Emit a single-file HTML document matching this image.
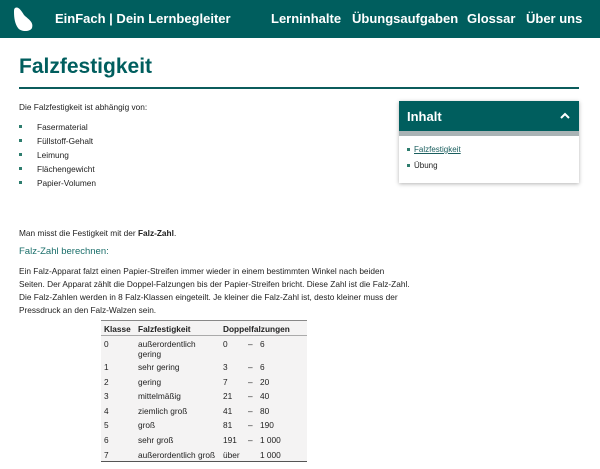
<!DOCTYPE html>
<html><head><meta charset="utf-8"><style>
*{margin:0;padding:0;box-sizing:border-box}
body{width:600px;height:469px;overflow:hidden;background:#fff;font-family:"Liberation Sans",sans-serif;color:#222;position:relative}
.hdr{position:absolute;left:0;top:0;width:600px;height:38px;background:#005e5e;color:#fff;font-size:13px;font-weight:bold}
.hdr span{position:absolute;top:11px}
h1{position:absolute;left:19px;top:55px;font-size:21px;color:#005e5e}
.rule{position:absolute;left:19px;top:87px;width:560px;height:2px;background:#0b5c5c}
.t{font-size:8.3px;position:absolute;left:19px;white-space:nowrap}
.li::before{content:"";position:absolute;left:-18px;top:3px;width:3px;height:3px;background:#2e7d6e}
.li{left:37px}
.toc{position:absolute;left:399px;top:101px;width:180px;height:82px;box-shadow:0 1px 4px rgba(0,0,0,.3);background:#fff}
.toch{height:30px;background:#005e5e;color:#fff;font-weight:bold;font-size:13px;padding:8px 8px;position:relative}
.band{height:5px;background:#a9b3b5}
table{position:absolute;left:101px;top:320px;width:206px;border-collapse:collapse;font-size:8.3px;background:#f4f3f3;border-top:1px solid #888;border-bottom:1px solid #555;table-layout:fixed}
td,th{text-align:left;padding:0 3px;height:14.6px;vertical-align:top;padding-top:3px;line-height:10px;white-space:nowrap}
th{border-bottom:1px solid #aaa;height:15px}
</style></head><body>
<div class="hdr">
<svg style="position:absolute;left:12px;top:6px" width="24" height="26" viewBox="0 0 24 26"><path d="M3 2 C6 0 9 4 12 9 C16 13 22 16 20 22 C18 26 9 26 6 22 C3 18 2 12 2 6 C2 4 2 3 3 2Z" fill="#fff"/></svg>
<span style="left:55px">EinFach | Dein Lernbegleiter</span>
<span style="left:271px">Lerninhalte</span>
<span style="left:352px">Übungsaufgaben</span>
<span style="left:467px">Glossar</span>
<span style="left:526px">Über uns</span>
</div>
<h1>Falzfestigkeit</h1>
<div class="rule"></div>
<div class="t" style="top:102px">Die Falzfestigkeit ist abhängig von:</div>
<div class="t li" style="top:122px">Fasermaterial</div>
<div class="t li" style="top:136px">Füllstoff-Gehalt</div>
<div class="t li" style="top:150px">Leimung</div>
<div class="t li" style="top:164px">Flächengewicht</div>
<div class="t li" style="top:178px">Papier-Volumen</div>
<div class="t" style="top:228px">Man misst die Festigkeit mit der <b>Falz-Zahl</b>.</div>
<div class="t" style="top:246px;font-size:9.5px;color:#1a6e6a">Falz-Zahl berechnen:</div>
<div class="t" style="top:265px;line-height:13px">Ein Falz-Apparat falzt einen Papier-Streifen immer wieder in einem bestimmten Winkel nach beiden<br>Seiten. Der Apparat zählt die Doppel-Falzungen bis der Papier-Streifen bricht. Diese Zahl ist die Falz-Zahl.<br>Die Falz-Zahlen werden in 8 Falz-Klassen eingeteilt. Je kleiner die Falz-Zahl ist, desto kleiner muss der<br>Pressdruck an den Falz-Walzen sein.</div>
<div class="toc">
<div class="toch">Inhalt<svg style="position:absolute;right:9px;top:11px" width="10" height="7" viewBox="0 0 10 7"><path d="M1 6 L5 2 L9 6" stroke="#fff" stroke-width="2" fill="none"/></svg></div>
<div class="band"></div>
<div style="font-size:8px;padding:6px 0 0 8px;line-height:16px">
<div><span style="display:inline-block;width:3px;height:3px;background:#2e7d6e;vertical-align:middle;margin-right:4px"></span><u style="color:#1a5e5e">Falzfestigkeit</u></div>
<div><span style="display:inline-block;width:3px;height:3px;background:#2e7d6e;vertical-align:middle;margin-right:4px"></span>Übung</div>
</div></div>
<table>
<colgroup><col style="width:34px"><col style="width:85px"><col style="width:25px"><col style="width:12px"><col style="width:50px"></colgroup>
<tr><th>Klasse</th><th>Falzfestigkeit</th><th colspan="3">Doppelfalzungen</th></tr>
<tr><td style="height:23px">0</td><td>außerordentlich<br>gering</td><td>0</td><td>–</td><td>6</td></tr>
<tr><td>1</td><td>sehr gering</td><td>3</td><td>–</td><td>6</td></tr>
<tr><td>2</td><td>gering</td><td>7</td><td>–</td><td>20</td></tr>
<tr><td>3</td><td>mittelmäßig</td><td>21</td><td>–</td><td>40</td></tr>
<tr><td>4</td><td>ziemlich groß</td><td>41</td><td>–</td><td>80</td></tr>
<tr><td>5</td><td>groß</td><td>81</td><td>–</td><td>190</td></tr>
<tr><td>6</td><td>sehr groß</td><td>191</td><td>–</td><td>1 000</td></tr>
<tr><td>7</td><td>außerordentlich groß</td><td>über</td><td></td><td>1 000</td></tr>
</table>
</body></html>
